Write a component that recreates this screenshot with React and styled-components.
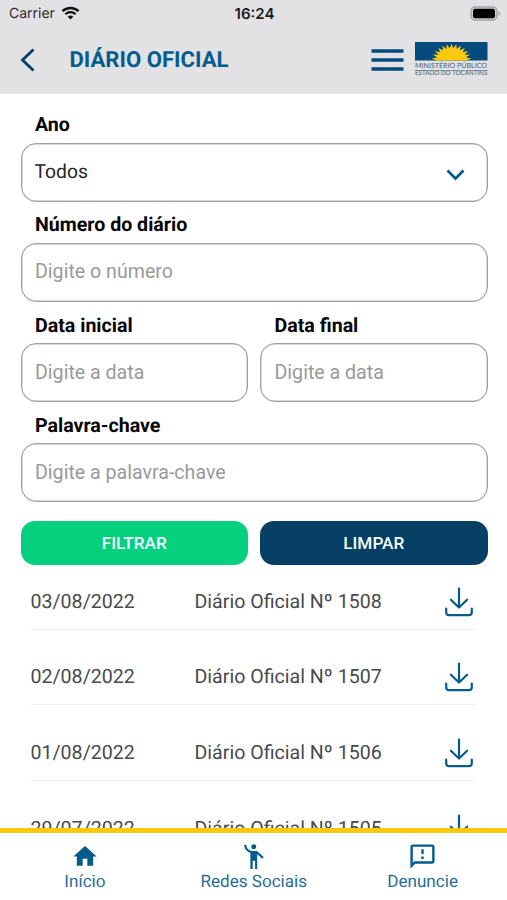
import React from 'react';
import styled, { createGlobalStyle } from 'styled-components';

const BLUE = '#045b8c';
const NAVY = '#053f63';

const GlobalStyle = createGlobalStyle`
  * { box-sizing: border-box; }
  body { margin: 0; background: #fff; overflow: hidden; }
  button, input { font: inherit; }
`;

const Screen = styled.div`
  display: flex;
  flex-direction: column;
  width: 507px;
  height: 900px;
  background: #fff;
  font-family: Roboto, sans-serif;
  font-size: 19.6px;
  text-rendering: geometricPrecision;
  overflow: hidden;
`;

const Header = styled.header`
  flex: none;
  height: 94px;
  background: #e2e2e4;
  border-bottom: 1px solid #e6e6e8;
`;

const StatusBar = styled.div`
  display: grid;
  grid-template-columns: 1fr auto 1fr;
  align-items: center;
  height: 27px;
  padding: 0 6px 0 9px;
  font-family: Inter, sans-serif;
  font-size: 14px;
  color: #2a2a2c;
`;

const Carrier = styled.div`
  display: flex;
  align-items: center;
  gap: 6px;
  svg { margin-bottom: 2px; }
`;

const Clock = styled.div`
  margin-right: 1px;
  font-size: 15px;
  font-weight: 600;
  color: #1c1c1e;
`;

const BatteryIcon = styled.svg`
  justify-self: end;
`;

const NavBar = styled.div`
  display: flex;
  align-items: center;
  height: 66px;
  padding: 0 19px 0 20px;
`;

const IconButton = styled.button`
  display: flex;
  padding: 0;
  border: 0;
  background: none;
`;

const Title = styled.h1`
  flex: 1;
  margin: 0 0 0 33.5px;
  font-size: 22.1px;
  line-height: 26px;
  font-weight: 700;
  color: ${BLUE};
`;

const Logo = styled.div`
  display: flex;
  flex-direction: column;
  width: 73px;
  margin: 0 0 2px 11px;
`;

const LogoLine = styled.span`
  height: ${(p) => p.$height}px;
  font-family: Lato, sans-serif;
  font-size: ${(p) => p.$size}px;
  line-height: ${(p) => p.$height + (p.$ruled ? -1 : 1)}px;
  white-space: nowrap;
  color: #4b5d6c;
  border-top: ${(p) => (p.$ruled ? '1px solid #8fa0ad' : '0')};
`;

const Form = styled.form`
  flex: none;
  display: grid;
  grid-template-columns: 1fr 1fr;
  column-gap: 12px;
  padding: 17px 19.5px 0 20.5px;
`;

const Field = styled.label`
  display: flex;
  flex-direction: column;
  height: 100.25px;
  grid-column: ${(p) => (p.$half ? 'auto' : '1 / -1')};
`;

const Label = styled.span`
  height: 31.5px;
  padding: 3px 0 0 14.5px;
  line-height: 22px;
  font-weight: 700;
  color: #050505;
`;

const Box = styled.span`
  display: flex;
  align-items: center;
  justify-content: space-between;
  height: 59px;
  padding: 0 22px 0 13px;
  border: 1px solid #a0a0a0;
  border-radius: 15px;
  box-shadow: inset 0 0 0 0.5px #b4b4b4;
  color: #262626;
`;

const Input = styled.input`
  width: 100%;
  padding: 0 0 1px 0.5px;
  border: 0;
  outline: 0;
  background: none;
  &::placeholder { color: #9a9a9a; opacity: 1; }
`;

const Selected = styled.span`
  padding-bottom: 1px;
  font-size: 19.3px;
`;

const Chevron = styled.svg`
  margin-top: 5px;
`;

const Action = styled.button`
  height: 44px;
  margin-top: 9px;
  padding: 0;
  border: 0;
  border-radius: 14px;
  background: ${(p) => p.$color};
  color: #f4fbff;
  font-size: 17.2px;
  font-weight: 500;
`;

const Results = styled.main`
  flex: 1;
  min-height: 0;
  padding: 0 31px 0 30.5px;
  overflow: hidden;
`;

const Row = styled.div`
  display: grid;
  grid-template-columns: 164px 1fr auto;
  align-items: end;
  height: ${(p) => (p.$first ? 64.5 : 75.8)}px;
  padding: 0 3px 12px 0;
  border-bottom: 1px solid #f0f0f0;
  line-height: 31px;
  white-space: nowrap;
  color: #484a4d;
`;

const TabBar = styled.nav`
  flex: none;
  display: grid;
  grid-template-columns: repeat(3, 1fr);
  height: 72.5px;
  padding-left: 0.5px;
  border-top: 5px solid #fdc90f;
  background: #fff;
`;

const Tab = styled.a`
  display: flex;
  flex-direction: column;
  align-items: center;
  padding-top: 9px;
  font-size: 17.1px;
  line-height: 20px;
  color: ${BLUE};
  svg { display: block; height: 29px; margin-bottom: 1.5px; }
`;

const TabText = styled.span`
  opacity: 0.88;
`;

function Wifi() {
  return (
    <svg width="19" height="14" viewBox="0 0 19 14">
      <path d="M1.4 5.2 A11.6 11.6 0 0 1 17.6 5.2" fill="none" stroke="#111" strokeWidth="2.5" />
      <path d="M4.4 8.3 A7.3 7.3 0 0 1 14.6 8.3" fill="none" stroke="#111" strokeWidth="2.3" />
      <path d="M9.5 13.6 L6.7 10.7 A4.1 4.1 0 0 1 12.3 10.7 Z" fill="#111" />
    </svg>
  );
}

function Battery() {
  return (
    <BatteryIcon width="31" height="16" viewBox="0 0 31 16">
      <rect x="1" y="1" width="26" height="13" rx="4" fill="#d0d0d0" stroke="#a3a3a5" strokeWidth="1.4" />
      <rect x="3" y="2.8" width="22" height="9.5" rx="2" fill="#000" />
      <path d="M28.6 5 Q32 7.5 28.6 10 Z" fill="#a3a3a5" />
    </BatteryIcon>
  );
}

function sunPoints() {
  const pts = [];
  const rays = 13;
  for (let i = 0; i <= rays * 2; i += 1) {
    const a = Math.PI - (Math.PI * i) / (rays * 2);
    const k = i % 2 ? 1 : 0.74;
    pts.push(`${(36.5 + Math.cos(a) * 20 * k).toFixed(1)},${(18.5 - Math.sin(a) * 16.8 * k).toFixed(1)}`);
  }
  return pts.join(' ');
}

function Emblem() {
  return (
    <svg width="73" height="19" viewBox="0 0 73 19">
      <rect width="72.5" height="18.5" fill="#054a7c" />
      <polygon points={sunPoints()} fill="#fdc90f" />
    </svg>
  );
}

function Download() {
  return (
    <svg width="28" height="30" viewBox="0 0 28 30" fill="none" stroke={BLUE} strokeWidth="2.2" strokeLinecap="round" strokeLinejoin="round">
      <path d="M14 1.5V20.5M5.9 12.7L14 20.5L22.1 12.7" />
      <path d="M1.2 21.5V25.2Q1.2 28.2 4.2 28.2H23.8Q26.8 28.2 26.8 25.2V21.5" />
    </svg>
  );
}

function WavingPerson() {
  return (
    <svg width="28" height="28" viewBox="0 0 28 28" fill={BLUE}>
      <circle cx="13.8" cy="4.2" r="2.5" />
      <path d="M10.4 8.4H16.2L17.2 8.8V26.5H15.1V18.2H12.7V26.5H10.4Z" />
      <path d="M5.1 2.4Q5.8 8.4 11.4 9.6M16.2 9.3L23 15.4" fill="none" stroke={BLUE} strokeWidth="2.1" />
    </svg>
  );
}

const RESULTS = [
  ['03/08/2022', '1508'],
  ['02/08/2022', '1507'],
  ['01/08/2022', '1506'],
  ['29/07/2022', '1505'],
];

function TextField({ label, placeholder, half }) {
  return (
    <Field $half={half}>
      <Label>{label}</Label>
      <Box><Input placeholder={placeholder} /></Box>
    </Field>
  );
}

export default function App() {
  return (
    <Screen>
      <GlobalStyle />
      <Header>
        <StatusBar>
          <Carrier>Carrier <Wifi /></Carrier>
          <Clock>16:24</Clock>
          <Battery />
        </StatusBar>
        <NavBar>
          <IconButton aria-label="Voltar">
            <svg width="16" height="24" viewBox="0 0 16 24" fill="none" stroke={NAVY} strokeWidth="2.8">
              <path d="M13.5 1.5L2.5 12L13.5 22.5" />
            </svg>
          </IconButton>
          <Title>DIÁRIO OFICIAL</Title>
          <IconButton aria-label="Menu">
            <svg width="33" height="22" viewBox="0 0 33 22" stroke="#054a7c" strokeWidth="3.4">
              <path d="M0.5 2H32.5M0.5 11H32.5M0.5 20H32.5" />
            </svg>
          </IconButton>
          <Logo>
            <Emblem />
            <LogoLine $height={9} $size={7.1}>MINISTÉRIO PÚBLICO</LogoLine>
            <LogoLine $height={7} $size={6.25} $ruled>ESTADO DO TOCANTINS</LogoLine>
          </Logo>
        </NavBar>
      </Header>

      <Form>
        <Field as="div">
          <Label>Ano</Label>
          <Box>
            <Selected>Todos</Selected>
            <Chevron width="19" height="12" viewBox="0 0 19 12" fill="none" stroke={BLUE} strokeWidth="2.7">
              <path d="M1.5 1.5L9.5 9.5L17.5 1.5" />
            </Chevron>
          </Box>
        </Field>
        <TextField label="Número do diário" placeholder="Digite o número" />
        <TextField label="Data inicial" placeholder="Digite a data" half />
        <TextField label="Data final" placeholder="Digite a data" half />
        <TextField label="Palavra-chave" placeholder="Digite a palavra-chave" />
        <Action type="button" $color="#04d07e">FILTRAR</Action>
        <Action type="button" $color={NAVY}>LIMPAR</Action>
      </Form>

      <Results>
        {RESULTS.map(([date, number], i) => (
          <Row key={number} $first={i === 0}>
            <span>{date}</span>
            <span>Diário Oficial Nº {number}</span>
            <Download />
          </Row>
        ))}
      </Results>

      <TabBar>
        <Tab>
          <svg width="28" height="28" viewBox="0 0 24 24" fill={BLUE}>
            <path d="M10,20V14H14V20H19V12H22L12,3L2,12H5V20H10Z" />
          </svg>
          <TabText>Início</TabText>
        </Tab>
        <Tab>
          <WavingPerson />
          <TabText>Redes Sociais</TabText>
        </Tab>
        <Tab>
          <svg width="29" height="29" viewBox="0 0 24 24" fill={BLUE}>
            <path d="M13,10H11V6H13V10M13,14H11V12H13V14M20,2H4A2,2 0 0,0 2,4V22L6,18H20A2,2 0 0,0 22,16V4C22,2.89 21.1,2 20,2M20,16H5.2L4,17.2V4H20V16Z" />
          </svg>
          <TabText>Denuncie</TabText>
        </Tab>
      </TabBar>
    </Screen>
  );
}
